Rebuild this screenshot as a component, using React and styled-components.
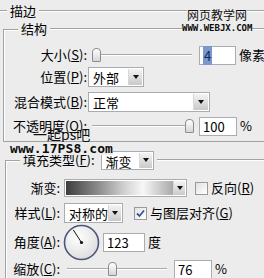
import React from "react";
import styled, { createGlobalStyle } from "styled-components";

const GlobalStyle = createGlobalStyle`
  html, body { margin: 0; padding: 0; background: #ececec; }
  body {
    font-family: "Noto Sans CJK SC", "Noto Sans", sans-serif;
    font-size: 13px;
    color: #000;
  }
`;

const Panel = styled.div`
  position: relative;
  width: 264px;
  height: 278px;
  overflow: hidden;
  background: #ececec;
`;

const HeadRow = styled.div`
  display: flex;
  align-items: center;
  height: ${(p) => p.$h}px;
`;

const Rule = styled.span`
  flex: ${(p) => (p.$w ? `0 0 ${p.$w}px` : "1")};
  height: 0;
  border-top: 1px solid #a2a2a2;
  border-bottom: 1px solid #fff;
`;

const Corner = styled.span`
  align-self: stretch;
  flex: 0 0 ${(p) => p.$w}px;
  margin-top: ${(p) => p.$top}px;
  border-top: 1px solid #a2a2a2;
  border-left: 1px solid #a2a2a2;
  box-shadow: inset 1px 1px #fff;
`;

const LegendText = styled.span`
  padding: 0 3px;
  line-height: 18px;
  white-space: nowrap;
`;

const Group = styled.div`
  margin-left: ${(p) => p.$left}px;
  margin-top: ${(p) => p.$top || 0}px;
`;

const Body = styled.div`
  padding: ${(p) => p.$pad};
  border-left: 1px solid #a2a2a2;
  border-bottom: ${(p) => (p.$open ? "none" : "1px solid #a2a2a2")};
  box-shadow: inset 1px 0 #fff;
`;

const Row = styled.div`
  display: flex;
  align-items: center;
  height: ${(p) => p.$h || 20}px;
  margin-top: ${(p) => p.$mt || 0}px;
`;

const Label = styled.span`
  flex: 0 0 ${(p) => p.$w}px;
  text-align: right;
  white-space: nowrap;
  line-height: 18px;
`;

const U = styled.span`
  text-decoration: underline;
  text-underline-offset: 1px;
`;

const Text = styled.span`
  margin-left: ${(p) => p.$ml || 0}px;
  white-space: nowrap;
  line-height: 18px;
`;

const SliderBox = styled.div`
  position: relative;
  flex: 0 0 ${(p) => p.$w}px;
  margin-left: ${(p) => p.$ml}px;
  height: 14px;
  &::before {
    content: "";
    position: absolute;
    left: 0;
    right: 0;
    top: 6px;
    border-top: 1px solid #a8a8a8;
    border-bottom: 1px solid #fff;
  }
`;

const Thumb = styled.span`
  position: absolute;
  top: 0;
  width: 7px;
  height: 12px;
  border: 1px solid #8c8c8c;
  border-radius: 4px 4px 1px 1px;
  background: linear-gradient(#ffffff, #d6d6d6);
`;

const Slider = ({ w, ml, pos }) => (
  <SliderBox $w={w} $ml={ml}>
    <Thumb style={{ left: pos }} />
  </SliderBox>
);

const Field = styled.div`
  box-sizing: border-box;
  flex: 0 0 ${(p) => p.$w}px;
  margin-left: ${(p) => p.$ml}px;
  height: ${(p) => p.$h || 19}px;
  border: 1px solid #a9adb2;
  background: #fff;
  padding-left: 3px;
  line-height: 17px;
`;

const Selected = styled.span`
  background: #7b98cc;
  color: #16275c;
  padding: 0 1px;
`;

const Select = styled.div`
  box-sizing: border-box;
  display: flex;
  flex: 0 0 ${(p) => p.$w}px;
  margin-left: ${(p) => p.$ml}px;
  height: ${(p) => p.$h || 20}px;
  border: 1px solid #a9adb2;
  background: #fff;
  padding: 1px;
`;

const SelectValue = styled.span`
  flex: 1;
  padding-left: 3px;
  line-height: 17px;
  white-space: nowrap;
`;

const ArrowBtn = styled.span`
  flex: 0 0 ${(p) => p.$w || 13}px;
  display: flex;
  align-items: center;
  justify-content: center;
  background: linear-gradient(#f4f4f4, #c9c9c9);
  border-left: 1px solid #d8d8d8;
  &::after {
    content: "";
    border-left: 3px solid transparent;
    border-right: 3px solid transparent;
    border-top: 4px solid #111;
  }
`;

const GradientBar = styled.span`
  flex: 1;
  background: linear-gradient(
    to right,
    #3e3e3e 0%,
    #8c8c8c 30%,
    #d2d2d2 55%,
    #f7f7f7 72%,
    #a9a9a9 100%
  );
`;

const Check = styled.span`
  box-sizing: border-box;
  flex: 0 0 13px;
  height: 13px;
  margin-left: ${(p) => p.$ml}px;
  border: 1px solid #9a9a9a;
  background: linear-gradient(135deg, #e2e2e2, #ffffff);
  display: flex;
  align-items: center;
  justify-content: center;
`;

const Dial = styled.svg`
  flex: 0 0 37px;
  margin-left: ${(p) => p.$ml}px;
`;

const WaterCn = styled.span`
  position: absolute;
  left: ${(p) => p.$x}px;
  top: ${(p) => p.$y}px;
  font-size: ${(p) => p.$size}px;
  line-height: 1;
  color: #111;
  background: ${(p) => p.$bg || "transparent"};
  white-space: nowrap;
`;

const WaterUrl = styled.span`
  position: absolute;
  left: ${(p) => p.$x}px;
  top: ${(p) => p.$y}px;
  font-family: "DejaVu Sans Mono", monospace;
  font-weight: bold;
  font-size: ${(p) => p.$size}px;
  letter-spacing: ${(p) => p.$ls || 0}px;
  line-height: 1;
  color: #0c0c0c;
  background: #ececec;
  white-space: nowrap;
`;

export default function App() {
  return (
    <Panel>
      <GlobalStyle />

      <HeadRow $h={22}>
        <Rule $w={7} />
        <LegendText>描边</LegendText>
        <Rule />
      </HeadRow>

      <Group $left={3}>
        <HeadRow $h={14}>
          <Corner $w={14} $top={7} />
          <LegendText>结构</LegendText>
          <Rule />
        </HeadRow>
        <Body $pad="9px 0 5px 0">
          <Row>
            <Label $w={83}>
              大小(<U>S</U>):
            </Label>
            <Slider w={100} ml={5} pos={0} />
            <Field $w={37} $ml={7}>
              <Selected>4</Selected>
            </Field>
            <Text $ml={3}>像素</Text>
          </Row>
          <Row $mt={2}>
            <Label $w={83}>
              位置(<U>P</U>):
            </Label>
            <Select $w={56} $ml={1}>
              <SelectValue>外部</SelectValue>
              <ArrowBtn />
            </Select>
          </Row>
          <Row $mt={5}>
            <Label $w={83}>
              混合模式(<U>B</U>):
            </Label>
            <Select $w={122} $ml={1}>
              <SelectValue>正常</SelectValue>
              <ArrowBtn $w={14} />
            </Select>
          </Row>
          <Row $mt={4}>
            <Label $w={83}>
              不透明度(<U>O</U>):
            </Label>
            <Slider w={100} ml={5} pos={93} />
            <Field $w={38} $ml={7}>
              100
            </Field>
            <Text $ml={3}>%</Text>
          </Row>
        </Body>
      </Group>

      <Group $left={5} $top={9}>
        <HeadRow $h={18}>
          <Corner $w={14} $top={9} />
          <LegendText>
            填充类型(<U>F</U>):
          </LegendText>
          <Select $w={53} $ml={3} $h={19}>
            <SelectValue>渐变</SelectValue>
            <ArrowBtn $w={12} />
          </Select>
          <Rule style={{ marginLeft: 3 }} />
        </HeadRow>
        <Body $pad="9px 0 0 0" $open>
          <Row>
            <Label $w={54}>渐变:</Label>
            <Select $w={123} $ml={4} $h={18}>
              <GradientBar />
              <ArrowBtn $w={11} />
            </Select>
            <Check $ml={8} />
            <Text $ml={3}>
              反向(<U>R</U>)
            </Text>
          </Row>
          <Row $mt={5}>
            <Label $w={54}>
              样式(<U>L</U>):
            </Label>
            <Select $w={59} $ml={4}>
              <SelectValue>对称的</SelectValue>
              <ArrowBtn $w={12} />
            </Select>
            <Check $ml={11}>
              <svg width="9" height="9" viewBox="0 0 9 9">
                <path
                  d="M1 4.5 L3.5 7 L8 1.5"
                  fill="none"
                  stroke="#3b5495"
                  strokeWidth="1.8"
                />
              </svg>
            </Check>
            <Text $ml={3}>
              与图层对齐(<U>G</U>)
            </Text>
          </Row>
          <Row $h={34} $mt={2}>
            <Label $w={54}>
              角度(<U>A</U>):
            </Label>
            <Dial $ml={3} width="37" height="37" viewBox="0 0 37 37">
              <defs>
                <radialGradient id="dialFill" cx="40%" cy="35%" r="70%">
                  <stop offset="0" stopColor="#ffffff" />
                  <stop offset="1" stopColor="#dcdcdc" />
                </radialGradient>
              </defs>
              <circle
                cx="18.5"
                cy="18.5"
                r="17"
                fill="url(#dialFill)"
                stroke="#4d5676"
                strokeWidth="1.6"
              />
              <line
                x1="18.5"
                y1="18.5"
                x2="10.3"
                y2="5.9"
                stroke="#111"
                strokeWidth="1"
              />
              <circle cx="18.5" cy="18.5" r="1.6" fill="#111" />
            </Dial>
            <Field $w={42} $ml={3}>
              123
            </Field>
            <Text $ml={3}>度</Text>
          </Row>
          <Row>
            <Label $w={54}>
              缩放(<U>C</U>):
            </Label>
            <Slider w={100} ml={7} pos={41} />
            <Field $w={38} $ml={7}>
              76
            </Field>
            <Text $ml={3}>%</Text>
          </Row>
        </Body>
      </Group>

      <WaterCn $x={187} $y={9} $size={12} $bg="#ececec">
        网页教学网
      </WaterCn>
      <WaterUrl $x={182} $y={24} $size={9}>
        WWW.WEBJX.COM
      </WaterUrl>
      <WaterCn $x={33} $y={127} $size={14}>
        一起ps吧
      </WaterCn>
      <WaterUrl $x={10} $y={142} $size={13} $ls={0.1}>
        www.17PS8.com
      </WaterUrl>
    </Panel>
  );
}
